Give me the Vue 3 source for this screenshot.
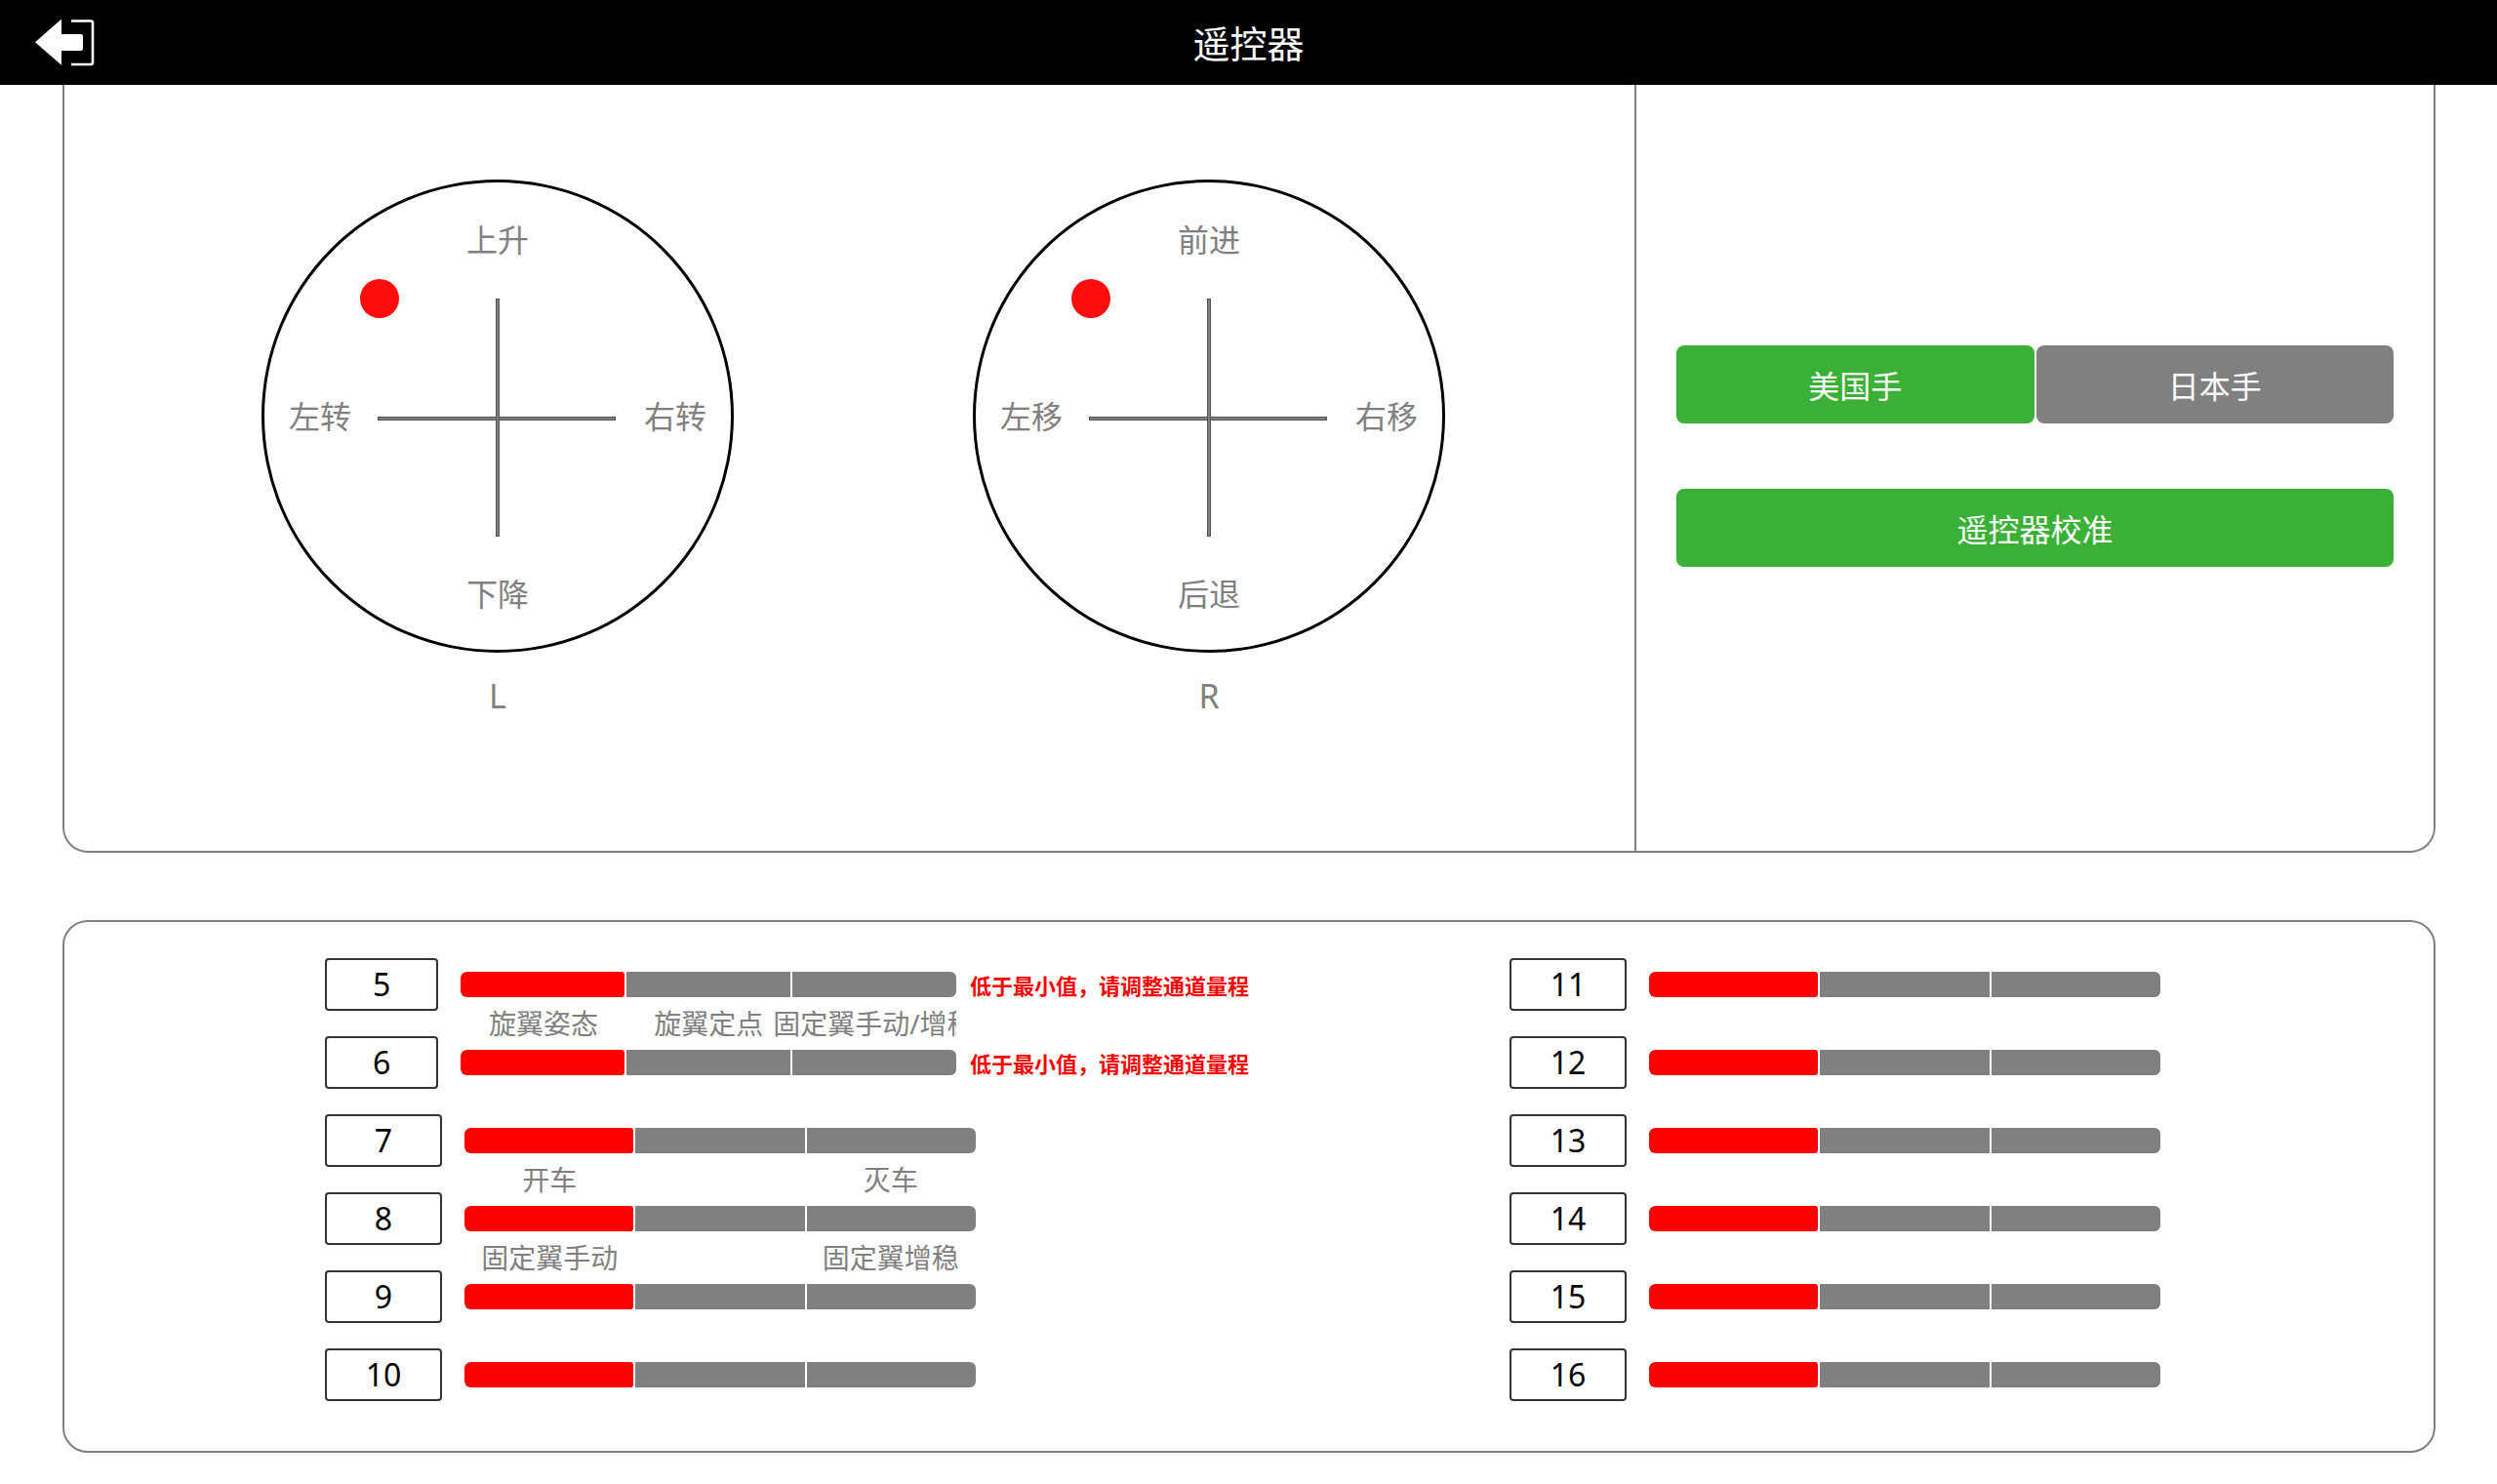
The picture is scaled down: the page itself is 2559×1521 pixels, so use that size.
<script setup>
const sticks = [
  { name: 'L', up: '上升', down: '下降', left: '左转', right: '右转' },
  { name: 'R', up: '前进', down: '后退', left: '左移', right: '右移' },
]
const warn = '低于最小值，请调整通道量程'
const leftChannels = [
  { id: 5, warn: true, labels: [] },
  { id: 6, warn: true, labels: ['旋翼姿态', '旋翼定点', '固定翼手动/增稳'] },
  { id: 7, labels: [] },
  { id: 8, labels: ['开车', '', '灭车'] },
  { id: 9, labels: ['固定翼手动', '', '固定翼增稳'] },
  { id: 10, labels: [] },
]
const rightChannels = [11, 12, 13, 14, 15, 16].map((id) => ({ id, labels: [] }))
const columns = [leftChannels, rightChannels]
</script>

<template>
  <div class="page">
    <header class="topbar">
      <svg class="back" width="100" height="87" viewBox="0 0 100 87">
        <path d="M36 43.3 L63 19.5 V35 H83 Q85 35 85 37 V50 Q85 52 83 52 H63 V66.7 Z" fill="#fff" />
        <path d="M73 21.5 H93 Q95 21.5 95 23.5 V64 Q95 66 93 66 H73" fill="none" stroke="#fff" stroke-width="2.6" />
      </svg>
      <h1 class="title">遥控器</h1>
    </header>

    <section class="panel panel-top">
      <div class="sticks">
        <div v-for="s in sticks" :key="s.name" class="stick-wrap">
          <div class="stick">
            <span class="lbl up">{{ s.up }}</span>
            <span class="lbl down">{{ s.down }}</span>
            <span class="lbl left">{{ s.left }}</span>
            <span class="lbl right">{{ s.right }}</span>
            <span class="axis h"></span>
            <span class="axis v"></span>
            <span class="dot"></span>
          </div>
          <div class="stick-name">{{ s.name }}</div>
        </div>
      </div>
      <div class="controls">
        <div class="mode">
          <button class="btn green">美国手</button>
          <button class="btn gray">日本手</button>
        </div>
        <button class="btn green wide">遥控器校准</button>
      </div>
    </section>

    <section class="panel panel-bottom">
      <div v-for="(col, i) in columns" :key="i" class="column">
        <div v-for="ch in col" :key="ch.id" class="row">
          <div class="num">{{ ch.id }}</div>
          <div class="track-wrap">
            <div v-if="ch.labels.length" class="labels">
              <span v-for="(l, j) in ch.labels" :key="j" class="cell">{{ l }}</span>
            </div>
            <div class="track">
              <span class="seg red"></span>
              <span class="seg"></span>
              <span class="seg"></span>
            </div>
          </div>
          <div v-if="ch.warn" class="warn">{{ warn }}</div>
        </div>
      </div>
    </section>
  </div>
</template>

<style scoped>
.page {
  width: 2559px;
  height: 1521px;
  background: #fff;
  font-family: "Noto Sans", "Noto Sans CJK SC", sans-serif;
  overflow: hidden;
}
.topbar {
  height: 87px;
  background: #000;
  position: relative;
  display: flex;
  align-items: center;
  justify-content: center;
}
.back {
  position: absolute;
  left: 0;
  top: 0;
}
.title {
  margin: 0;
  color: #fff;
  font-size: 38px;
  font-weight: 400;
  line-height: 1;
}
.panel {
  box-sizing: border-box;
  width: 2432px;
  margin-left: 64px;
  border: 2px solid #808080;
}
.panel-top {
  height: 787px;
  border-top: 0;
  border-radius: 0 0 26px 26px;
  display: flex;
}
.sticks {
  width: 1609px;
  box-sizing: border-box;
  padding: 97px 0 0 202px;
  display: flex;
  gap: 245px;
}
.stick-wrap {
  width: 484px;
}
.stick {
  position: relative;
  box-sizing: border-box;
  width: 484px;
  height: 485px;
  border: 3px solid #000;
  border-radius: 50%;
}
.lbl {
  position: absolute;
  color: #808080;
  font-size: 32px;
  line-height: 40px;
  white-space: nowrap;
}
.up { left: 50%; top: 39px; transform: translateX(-50%); }
.down { left: 50%; top: 402px; transform: translateX(-50%); }
.left { left: 25px; top: 220px; }
.right { right: 25px; top: 220px; }
.axis {
  position: absolute;
  background: #808080;
  border: 1px solid #555;
  box-sizing: border-box;
}
.axis.h { left: 116px; top: 240px; width: 244px; height: 4px; }
.axis.v { left: 237px; top: 119px; width: 4px; height: 244px; }
.dot {
  position: absolute;
  left: 98px;
  top: 99px;
  width: 40px;
  height: 40px;
  border-radius: 50%;
  background: #ff0d0d;
}
.stick-name {
  text-align: center;
  color: #808080;
  font-size: 34px;
  line-height: 44px;
  margin-top: 22px;
}
.controls {
  flex: 1;
  border-left: 2px solid #808080;
  box-sizing: border-box;
  padding: 267px 41px 0 41px;
  display: flex;
  flex-direction: column;
  gap: 67px;
}
.mode {
  display: flex;
  gap: 2px;
}
.btn {
  border: 0;
  padding: 0;
  height: 80px;
  border-radius: 8px;
  color: #fff;
  font: inherit;
  font-size: 32px;
  flex: 1;
}
.wide {
  flex: none;
  width: 100%;
}
.green { background: #3bb037; }
.gray { background: #808080; }
.panel-bottom {
  margin-top: 69px;
  height: 546px;
  border-radius: 26px;
  display: flex;
  padding-top: 37px;
}
.column {
  width: 1214px;
  box-sizing: border-box;
  padding-left: 267px;
  display: flex;
  flex-direction: column;
  gap: 26px;
}
.row {
  height: 54px;
  display: flex;
  align-items: center;
}
.num {
  box-sizing: border-box;
  width: 120px;
  height: 54px;
  border: 2px solid #333;
  border-radius: 4px;
  color: #000;
  font-size: 32px;
  line-height: 50px;
  text-align: center;
}
.track-wrap {
  position: relative;
  width: 524px;
  margin-left: 23px;
}
.track {
  display: flex;
  gap: 2px;
  height: 26px;
  border-radius: 6px;
  overflow: hidden;
}
.seg {
  flex: 1;
  background: #808080;
}
.seg.red {
  background: #f00;
  border-radius: 6px 3px 3px 6px;
}
.labels {
  position: absolute;
  left: 0;
  right: 0;
  top: -47px;
  height: 40px;
  display: flex;
  overflow: hidden;
}
.cell {
  flex: 1 1 0;
  min-width: 0;
  display: flex;
  justify-content: center;
  color: #808080;
  font-size: 28px;
  line-height: 40px;
  white-space: nowrap;
}
.warn {
  margin-left: 14px;
  color: #f00;
  font-size: 22px;
  font-weight: 700;
  white-space: nowrap;
}
</style>
